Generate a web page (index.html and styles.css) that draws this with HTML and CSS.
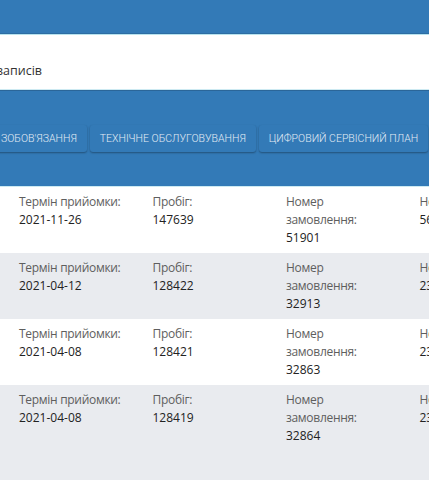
FILE: index.html
```html
<!DOCTYPE html>
<html lang="uk">
<head>
<meta charset="utf-8">
<link rel="stylesheet" href="styles.css">
</head>
<body>
<div class="topbar"></div>
<div class="info"><span class="info-text">записів</span></div>
<div class="tabs">
  <div class="tab-row">
    <div class="tab">ЗОБОВ'ЯЗАННЯ</div>
    <div class="tab">ТЕХНІЧНЕ ОБСЛУГОВУВАННЯ</div>
    <div class="tab">ЦИФРОВИЙ СЕРВІСНИЙ ПЛАН</div>
  </div>
</div>
<div class="rows">
  <div class="row">
    <div class="col"><div class="label">Термін прийомки:</div><div class="value">2021-11-26</div></div>
    <div class="col"><div class="label">Пробіг:</div><div class="value">147639</div></div>
    <div class="col"><div class="label">Номер замовлення:</div><div class="value">51901</div></div>
    <div class="col"><div class="label">Номер рахунку:</div><div class="value">56114</div></div>
  </div>
  <div class="row alt">
    <div class="col"><div class="label">Термін прийомки:</div><div class="value">2021-04-12</div></div>
    <div class="col"><div class="label">Пробіг:</div><div class="value">128422</div></div>
    <div class="col"><div class="label">Номер замовлення:</div><div class="value">32913</div></div>
    <div class="col"><div class="label">Номер рахунку:</div><div class="value">23307</div></div>
  </div>
  <div class="row">
    <div class="col"><div class="label">Термін прийомки:</div><div class="value">2021-04-08</div></div>
    <div class="col"><div class="label">Пробіг:</div><div class="value">128421</div></div>
    <div class="col"><div class="label">Номер замовлення:</div><div class="value">32863</div></div>
    <div class="col"><div class="label">Номер рахунку:</div><div class="value">23251</div></div>
  </div>
  <div class="row alt last">
    <div class="col"><div class="label">Термін прийомки:</div><div class="value">2021-04-08</div></div>
    <div class="col"><div class="label">Пробіг:</div><div class="value">128419</div></div>
    <div class="col"><div class="label">Номер замовлення:</div><div class="value">32864</div></div>
    <div class="col"><div class="label">Номер рахунку:</div><div class="value">23252</div></div>
  </div>
</div>
</body>
</html>
```
FILE: styles.css
```css
html, body {
  margin: 0;
  padding: 0;
  height: 100%;
}
body {
  width: 429px;
  height: 480px;
  overflow: hidden;
  font-family: "Open Sans", "Noto Sans", sans-serif;
  background: #e9ebef;
}
.topbar {
  height: 33px;
  background: #337ab7;
  border-bottom: 1px solid #2d6da3;
  box-shadow: 0 1px 0 #b9e3ef;
  position: relative;
}
.info {
  height: 54px;
  margin-top: 1px;
  background: #ffffff;
  border-bottom: 1px solid #cdeaf2;
  display: flex;
  align-items: center;
  font-size: 12.5px;
  color: #333;
}
.info-text {
  margin-left: -3px;
  padding-top: 16px;
}
.tabs {
  height: 95px;
  background: #337ab7;
  border-top: 1px solid #2b6699;
  border-bottom: 1px solid #cdeaf2;
  display: flex;
  align-items: center;
  overflow: hidden;
}
.tab-row {
  display: flex;
  gap: 3px;
  margin-left: -9px;
  margin-top: 0;
}
.tab {
  flex: none;
  height: 27px;
  line-height: 27px;
  padding: 0 10px;
  background: #337ab7;
  color: #e3ecf5;
  font-family: Roboto, "Liberation Sans", sans-serif;
  font-weight: 300;
  font-size: 10.5px;
  border-radius: 3px;
  box-shadow: 0 1px 2px rgba(0, 0, 0, 0.35);
  white-space: nowrap;
}
.rows {
  display: flex;
  flex-direction: column;
}
.row {
  display: flex;
  padding: 6px 0 6px 19px;
  background: #ffffff;
  font-size: 12px;
  line-height: 18px;
}
.row.alt {
  background: #e9ebef;
}
.row.last {
  height: 200px;
}
.col {
  flex: none;
  width: 108px;
  margin-right: 25.5px;
}
.label {
  color: #5e5e5e;
  letter-spacing: -0.3px;
}
.value {
  color: #222;
}
```
